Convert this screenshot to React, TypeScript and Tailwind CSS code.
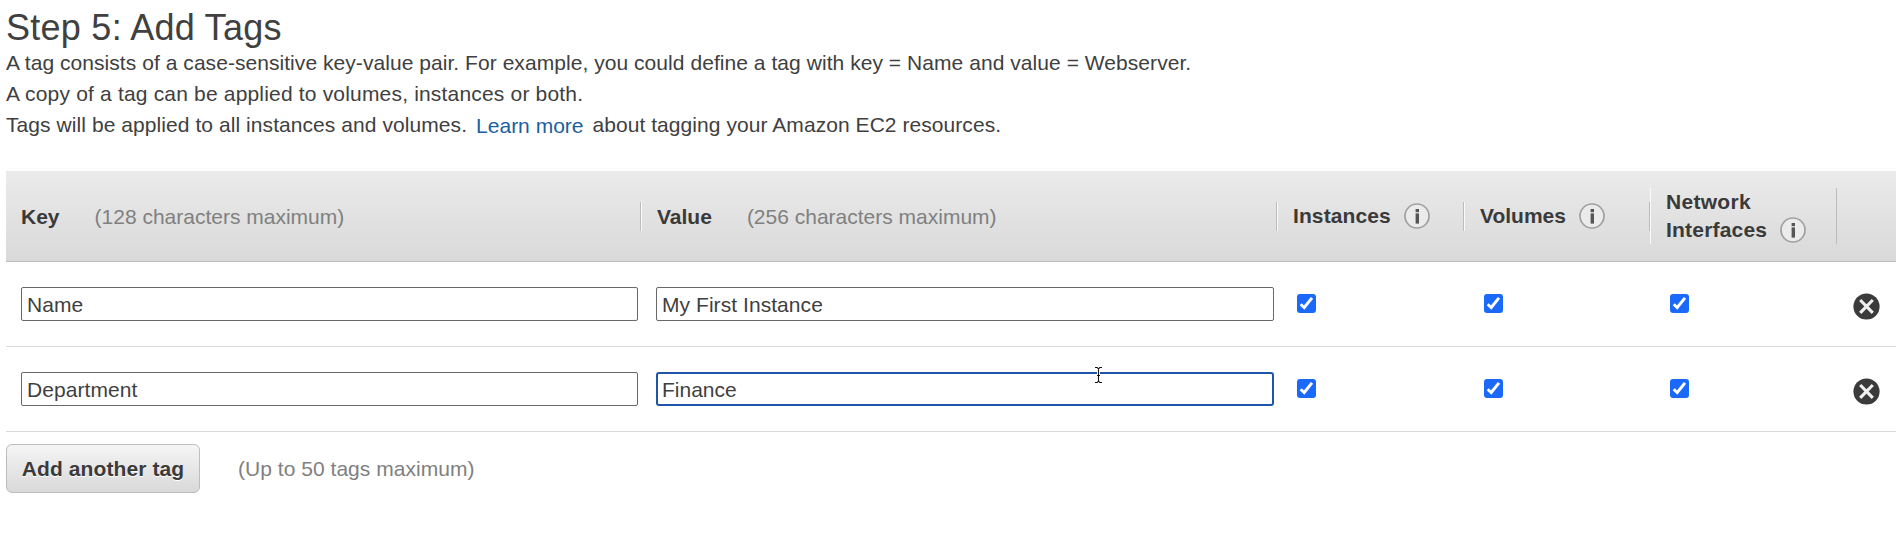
import React from "react";

const tags = [
  { key: "Name", value: "My First Instance", focused: false },
  { key: "Department", value: "Finance", focused: true },
];

const columns =
  "grid grid-cols-[635px_636px_187px_186px_187px_59px]";

function InfoIcon({ className = "" }: { className?: string }) {
  return (
    <svg viewBox="0 0 26 26" className={`size-[26px] shrink-0 ${className}`} aria-hidden="true">
      <circle cx="13" cy="13" r="12" fill="#ebebeb" stroke="#a0a0a0" strokeWidth="1.7" />
      <rect x="11.6" y="6" width="3.4" height="3.2" fill="#555" />
      <rect x="11.6" y="10.4" width="3.4" height="10.2" fill="#555" />
    </svg>
  );
}

function RemoveIcon() {
  return (
    <svg viewBox="0 0 27 27" className="size-[27px]" aria-hidden="true">
      <circle cx="13.5" cy="13.5" r="13.1" fill="#3b3b3b" />
      <path d="M7.2 7 19.8 19.8M19.8 7 7.2 19.8" stroke="#f0f0f0" strokeWidth="3.1" fill="none" />
    </svg>
  );
}

function Checkbox() {
  return (
    <span role="checkbox" aria-checked="true" className="flex size-[19px] items-center justify-center rounded-[3px] bg-[#1a69fb]">
      <svg viewBox="0 0 19 19" className="size-[19px]" aria-hidden="true">
        <path d="M3.7 10.2 7.2 13.5 15 3.8" fill="none" stroke="#fff" strokeWidth="2.9" />
      </svg>
    </span>
  );
}

function TagInput({ value, focused = false }: { value: string; focused?: boolean }) {
  return (
    <input
      type="text"
      defaultValue={value}
      className={
        focused
          ? "h-[34px] w-full rounded-[3px] border-2 border-[#1f55a8] bg-white pr-1 pl-1 pt-px text-[21px] text-[#3f3f3f] outline-none"
          : "h-[34px] w-full rounded-[2px] border border-[#686868] bg-white pr-1 pl-[5px] pt-px text-[21px] tracking-[0.06px] text-[#3f3f3f] outline-none"
      }
    />
  );
}

export default function App() {
  return (
    <main className="h-[534px] w-[1900px] overflow-hidden bg-white pl-1.5 font-['Liberation_Sans',Arial,sans-serif] text-[21px] leading-[31px] text-[#404040]">
      <h1 className="pt-[9px] text-[36px] leading-[38px] tracking-[0.26px]">Step 5: Add Tags</h1>
      <p className="tracking-[0.053px]">A tag consists of a case-sensitive key-value pair. For example, you could define a tag with key = Name and value = Webserver.</p>
      <p className="tracking-[0.18px]">A copy of a tag can be applied to volumes, instances or both.</p>
      <p className="flex">
        <span className="tracking-[0.07px]">Tags will be applied to all instances and volumes.</span>
        <a className="ml-[9px] pt-px text-[#1a5f9e]">Learn more</a>
        <span className="ml-[9px] tracking-[0.06px]">about tagging your Amazon EC2 resources.</span>
      </p>

      <section className="mt-[30px] w-[1890px]">
        <header className={`${columns} h-[91px] items-center border-b border-[#bdbdbd] bg-linear-to-b from-[#ebebeb] to-[#d9d9d9] text-[#3a3a3a]`}>
          <div className="flex h-[29px] items-center border-r border-[#bcbcbc] pl-[15px]">
            <b>Key</b>
            <span className="ml-[35px] text-[#808080]">(128 characters maximum)</span>
          </div>
          <div className="flex h-[29px] items-center border-r border-l border-r-[#bcbcbc] border-l-[#fafafa] pl-[15px]">
            <b>Value</b>
            <span className="ml-[35px] text-[#808080]">(256 characters maximum)</span>
          </div>
          <div className="flex h-[29px] items-center border-r border-l border-r-[#bcbcbc] border-l-[#fafafa] pl-[15px]">
            <b className="pb-0.5 tracking-[0.1px]">Instances</b>
            <InfoIcon className="ml-[13px]" />
          </div>
          <div className="flex h-[29px] items-center border-r border-l border-r-[#bcbcbc] border-l-[#fafafa] pl-[15px]">
            <b className="pb-0.5">Volumes</b>
            <InfoIcon className="ml-[13px]" />
          </div>
          <div className="flex h-14 flex-col border-r border-l border-r-[#bcbcbc] border-l-[#fafafa] pl-[15px] leading-[28px]">
            <b className="tracking-[0.3px]">Network</b>
            <div className="flex items-center">
              <b className="tracking-[0.2px]">Interfaces</b>
              <InfoIcon className="ml-[13px]" />
            </div>
          </div>
          <div />
        </header>

        {tags.map((tag) => (
          <div key={tag.key} className={`${columns} h-[85px] items-start border-b border-[#d9d9d9] pt-[25px]`}>
            <div className="flex pr-[3px] pl-[15px]">
              <TagInput value={tag.key} />
            </div>
            <div className="relative flex pr-[3px] pl-[15px]">
              <TagInput value={tag.value} focused={tag.focused} />
              {tag.focused && (
                <svg viewBox="0 0 9 18" className="absolute top-[-6px] left-[453px] h-[18px] w-[9px]" aria-hidden="true">
                  <path d="M1 1.5H3.2L4.5 2.8 5.8 1.5H8M4.5 2.8V15.2M1 16.5H3.2L4.5 15.2 5.8 16.5H8M3 9.5H6" fill="none" stroke="#fff" strokeWidth="3" />
                  <path d="M1 1.5H3.2L4.5 2.8 5.8 1.5H8M4.5 2.8V15.2M1 16.5H3.2L4.5 15.2 5.8 16.5H8M3 9.5H6" fill="none" stroke="#111" strokeWidth="1.1" />
                </svg>
              )}
            </div>
            <div className="pt-[7px] pl-5"><Checkbox /></div>
            <div className="pt-[7px] pl-5"><Checkbox /></div>
            <div className="pt-[7px] pl-5"><Checkbox /></div>
            <div className="pt-1.5 pl-4"><RemoveIcon /></div>
          </div>
        ))}
      </section>

      <div className="mt-3 flex items-center">
        <button className="h-[49px] w-[194px] rounded-[6px] border border-[#bdbdbd] bg-linear-to-b from-[#f5f5f5] to-[#d9d9d9] font-bold tracking-[0.1px] text-[#3a3a3a] [text-shadow:0_1px_0_#fff]">
          Add another tag
        </button>
        <span className="ml-[38px] tracking-[0.03px] text-[#808080]">(Up to 50 tags maximum)</span>
      </div>
    </main>
  );
}
